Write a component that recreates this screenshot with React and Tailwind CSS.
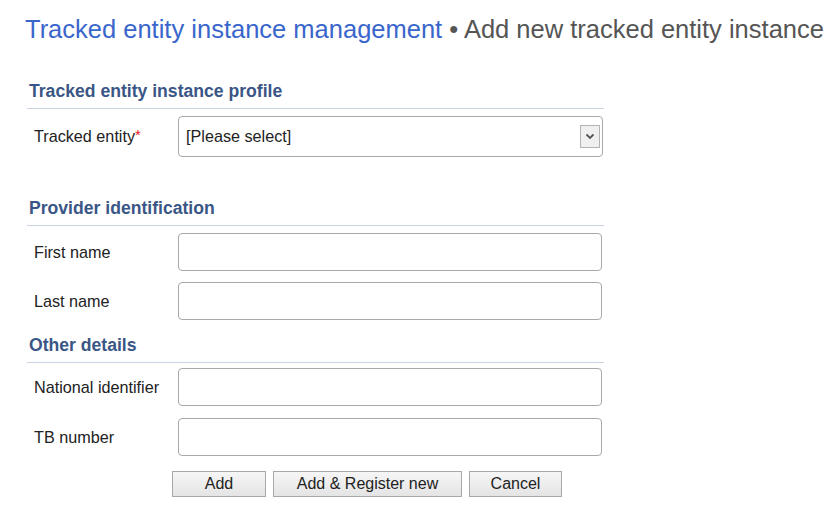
import React from "react";

function Heading({ children, className = "" }) {
  return (
    <div
      className={
        "pl-[2px] pb-[7px] border-b border-[#c9d3e2] text-[17.6px] leading-[20px] font-bold text-[#3a5686] " +
        className
      }
    >
      {children}
    </div>
  );
}

function Row({ label, required, children, className = "" }) {
  return (
    <div className={"flex items-center " + className}>
      <div className="w-[151px] pl-[7px] text-[16.2px] text-[#222]">
        {label}
        {required && <span className="text-[#e01b1b] align-top text-[15px] leading-none relative top-[3px]">*</span>}
      </div>
      {children}
    </div>
  );
}

function TextInput() {
  return (
    <div className="w-[424px] h-[38px] border border-[#a9a9a9] rounded-[4px] bg-white" />
  );
}

function Button({ children, w }) {
  return (
    <div
      className={
        "h-[26px] flex items-center justify-center border border-[#a8a8a8] bg-gradient-to-b from-[#f6f6f6] to-[#e4e4e4] text-[16px] text-[#222] " +
        w
      }
    >
      {children}
    </div>
  );
}

export default function App() {
  return (
    <div
      className="w-[839px] h-[518px] bg-white pl-[25px] pt-[14px]"
      style={{ fontFamily: '"Liberation Sans", Arial, sans-serif' }}
    >
      <div className="text-[25.5px] leading-[30px] whitespace-nowrap">
        <span className="text-[#3a66cc]">Tracked entity instance management</span>
        <span className="text-[#555]"> • Add new tracked entity instance</span>
      </div>

      <div className="ml-[2px] w-[577px]">
        <Heading className="mt-[37px]">Tracked entity instance profile</Heading>
        <Row label="Tracked entity" required className="mt-[7px]">
          <div className="w-[425px] h-[41px] border border-[#a9a9a9] rounded-[4px] bg-white flex items-center justify-between pl-[7px] pr-[2px]">
            <span className="text-[16.2px] text-[#222]">[Please select]</span>
            <div className="w-[20px] h-[23px] border border-[#b3b3b3] bg-[#efefef] flex items-center justify-center">
              <svg width="10" height="7" viewBox="0 0 10 7">
                <path d="M1.5 1.5 L5 5 L8.5 1.5" fill="none" stroke="#555" strokeWidth="1.8" />
              </svg>
            </div>
          </div>
        </Row>

        <Heading className="mt-[41px]">Provider identification</Heading>
        <Row label="First name" className="mt-[7px]">
          <TextInput />
        </Row>
        <Row label="Last name" className="mt-[11px]">
          <TextInput />
        </Row>

        <Heading className="mt-[15px]">Other details</Heading>
        <Row label="National identifier" className="mt-[5px]">
          <TextInput />
        </Row>
        <Row label="TB number" className="mt-[12px]">
          <TextInput />
        </Row>

        <div className="flex gap-[7px] ml-[145px] mt-[15px]">
          <Button w="w-[94px]">Add</Button>
          <Button w="w-[189px]">Add &amp; Register new</Button>
          <Button w="w-[93px]">Cancel</Button>
        </div>
      </div>
    </div>
  );
}
